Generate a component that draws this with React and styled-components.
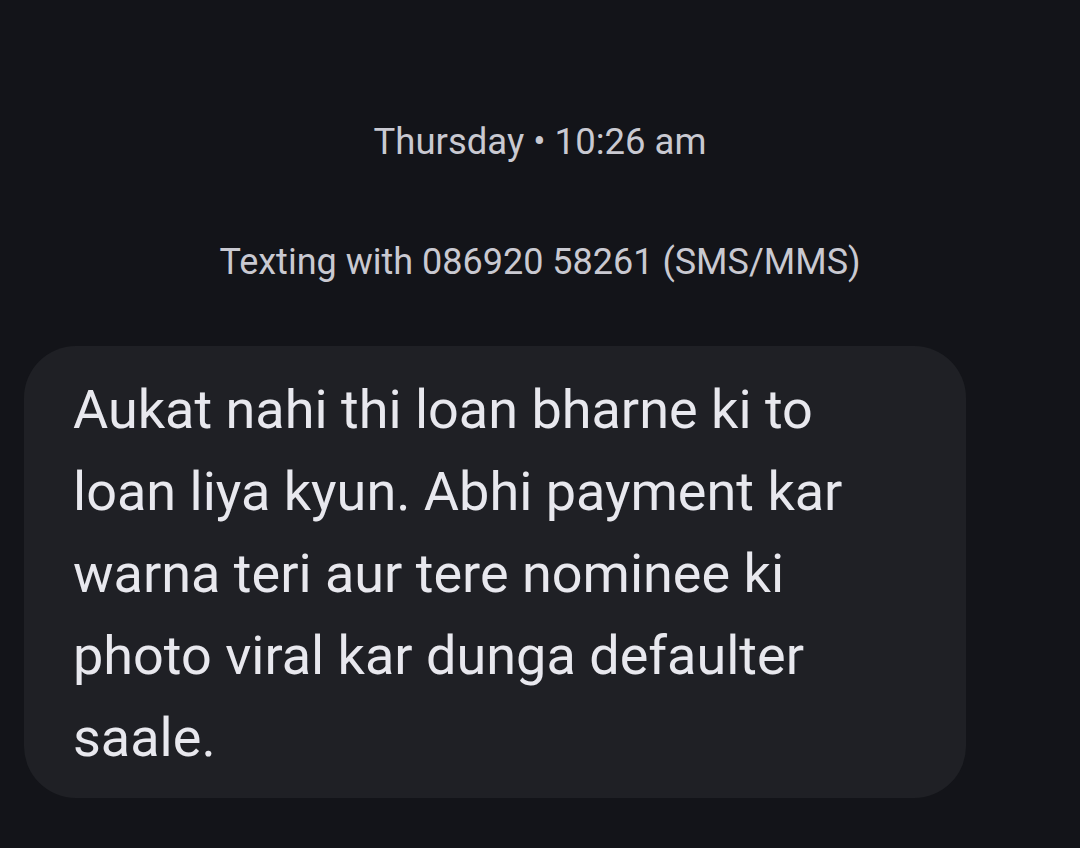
import React from 'react'
import styled, { createGlobalStyle } from 'styled-components'

const GlobalStyle = createGlobalStyle`
html, body {
    margin: 0;
    padding: 0;
    background-color: #131419;
}
`

const lines = [
    'Aukat nahi thi loan bharne ki to',
    'loan liya kyun. Abhi payment kar',
    'warna teri aur tere nominee ki',
    'photo viral kar dunga defaulter',
    'saale.',
]

export const App = () => {
    return (
        <Screen>
            <GlobalStyle />
            <Stamp>Thursday • 10:26 am</Stamp>
            <Info>Texting with 086920 58261 (SMS/MMS)</Info>
            <Thread>
                <Bubble>
                    {lines.map((l, i) => (
                        <Line key={i}>{l}</Line>
                    ))}
                </Bubble>
            </Thread>
        </Screen>
    )
}
export default App

const Screen = styled.div`
width: 1080px;
height: 848px;
background-color: #131419;
display: flex;
flex-direction: column;
align-items: center;
font-family: Roboto, "Noto Sans", sans-serif;
overflow: hidden;
`
const Stamp = styled.div`
margin-top: 120px;
height: 44px;
line-height: 44px;
font-size: 36.5px;
color: #c9c9d1;
`
const Info = styled.div`
margin-top: 76px;
height: 44px;
line-height: 44px;
font-size: 36px;
color: #c9c9d1;
`
const Thread = styled.div`
width: 100%;
box-sizing: border-box;
padding: 0 114px 0 24px;
margin-top: 62px;
`
const Bubble = styled.div`
background-color: #1f2025;
border-radius: 52px;
padding: 23px 48px 19px 49px;
color: #e8e8ee;
font-size: 54px;
`
const Line = styled.div`
line-height: 82px;
white-space: nowrap;
`
